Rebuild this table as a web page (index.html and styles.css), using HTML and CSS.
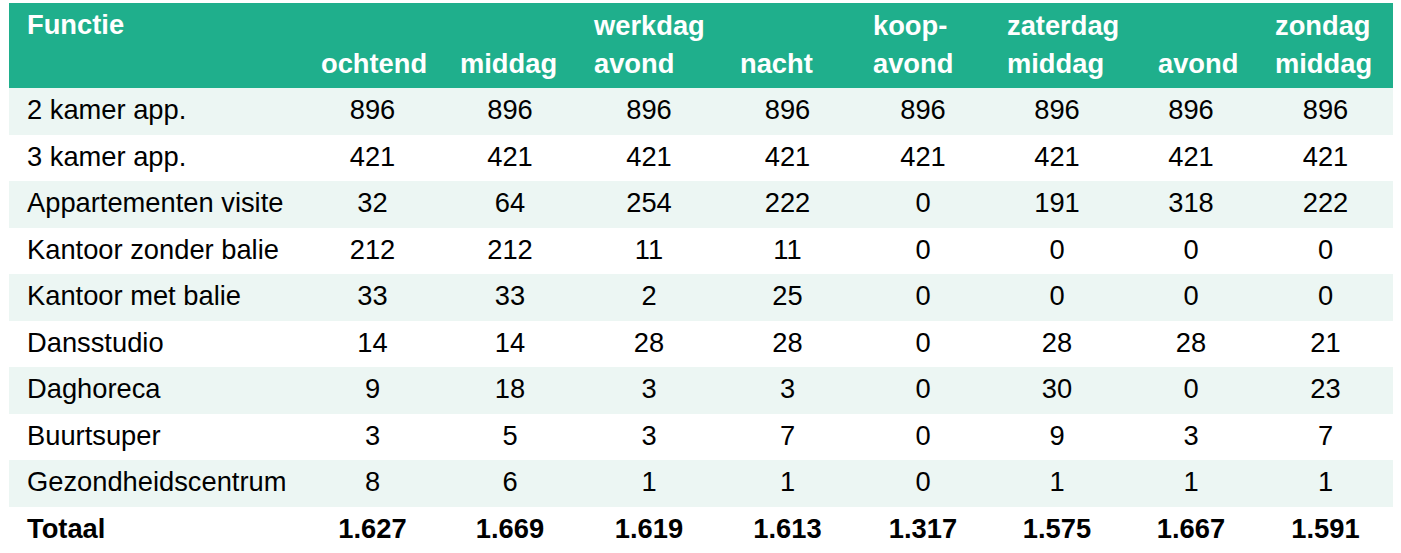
FILE: index.html
```html
<!DOCTYPE html>
<html lang="nl">
<head>
<meta charset="utf-8">
<title>Parkeerbehoefte per functie</title>
<link rel="stylesheet" href="styles.css">
</head>
<body>
<div class="table">
  <div class="row head">
    <div class="hc first top">Functie</div>
    <div class="hc p17">ochtend</div>
    <div class="hc p19">middag</div>
    <div class="hc p15">werkdag<br>avond</div>
    <div class="hc p21">nacht</div>
    <div class="hc p17">koop-<br>avond</div>
    <div class="hc p17">zaterdag<br>middag</div>
    <div class="hc p34">avond</div>
    <div class="hc p17">zondag<br>middag</div>
  </div>
  <div class="row tint">
    <div class="c first">2 kamer app.</div><div class="c">896</div><div class="c">896</div><div class="c">896</div><div class="c">896</div><div class="c">896</div><div class="c">896</div><div class="c">896</div><div class="c">896</div>
  </div>
  <div class="row">
    <div class="c first">3 kamer app.</div><div class="c">421</div><div class="c">421</div><div class="c">421</div><div class="c">421</div><div class="c">421</div><div class="c">421</div><div class="c">421</div><div class="c">421</div>
  </div>
  <div class="row tint">
    <div class="c first">Appartementen visite</div><div class="c">32</div><div class="c">64</div><div class="c">254</div><div class="c">222</div><div class="c">0</div><div class="c">191</div><div class="c">318</div><div class="c">222</div>
  </div>
  <div class="row">
    <div class="c first">Kantoor zonder balie</div><div class="c">212</div><div class="c">212</div><div class="c">11</div><div class="c">11</div><div class="c">0</div><div class="c">0</div><div class="c">0</div><div class="c">0</div>
  </div>
  <div class="row tint">
    <div class="c first">Kantoor met balie</div><div class="c">33</div><div class="c">33</div><div class="c">2</div><div class="c">25</div><div class="c">0</div><div class="c">0</div><div class="c">0</div><div class="c">0</div>
  </div>
  <div class="row">
    <div class="c first">Dansstudio</div><div class="c">14</div><div class="c">14</div><div class="c">28</div><div class="c">28</div><div class="c">0</div><div class="c">28</div><div class="c">28</div><div class="c">21</div>
  </div>
  <div class="row tint">
    <div class="c first">Daghoreca</div><div class="c">9</div><div class="c">18</div><div class="c">3</div><div class="c">3</div><div class="c">0</div><div class="c">30</div><div class="c">0</div><div class="c">23</div>
  </div>
  <div class="row">
    <div class="c first">Buurtsuper</div><div class="c">3</div><div class="c">5</div><div class="c">3</div><div class="c">7</div><div class="c">0</div><div class="c">9</div><div class="c">3</div><div class="c">7</div>
  </div>
  <div class="row tint">
    <div class="c first">Gezondheidscentrum</div><div class="c">8</div><div class="c">6</div><div class="c">1</div><div class="c">1</div><div class="c">0</div><div class="c">1</div><div class="c">1</div><div class="c">1</div>
  </div>
  <div class="row total">
    <div class="c first">Totaal</div><div class="c">1.627</div><div class="c">1.669</div><div class="c">1.619</div><div class="c">1.613</div><div class="c">1.317</div><div class="c">1.575</div><div class="c">1.667</div><div class="c">1.591</div>
  </div>
</div>
</body>
</html>
```

FILE: styles.css
```css
html, body {
  margin: 0;
  padding: 0;
  background: #ffffff;
  overflow: hidden;
}

body {
  padding: 3px 0 0 9px;
  font-family: "Liberation Sans", Arial, sans-serif;
  font-size: 27.3px;
  color: #000000;
}

.table {
  width: 1384px;
}

.row {
  display: grid;
  grid-template-columns: 295px 137px 138px 140px 137px 134px 134px 134px 135px;
  height: 46.5px;
  align-items: center;
  box-sizing: border-box;
  padding-bottom: 3px;
}

.row.tint {
  background: #ecf6f3;
}

.row.head {
  height: 85px;
  background: #1faf8c;
  color: #ffffff;
  font-weight: bold;
  align-items: stretch;
  padding: 3px 0 4px 0;
}

.hc {
  display: flex;
  flex-direction: column;
  justify-content: flex-end;
  line-height: 38.7px;
  text-align: left;
  white-space: nowrap;
}

.hc.top {
  justify-content: flex-start;
}

.c {
  text-align: center;
  line-height: 31px;
  white-space: nowrap;
}

.first {
  text-align: left;
  padding-left: 18px;
}

.p15 { padding-left: 15px; }
.p17 { padding-left: 17px; }
.p19 { padding-left: 19px; }
.p21 { padding-left: 21px; }
.p34 { padding-left: 34px; }

.row.total {
  font-weight: bold;
}
```
